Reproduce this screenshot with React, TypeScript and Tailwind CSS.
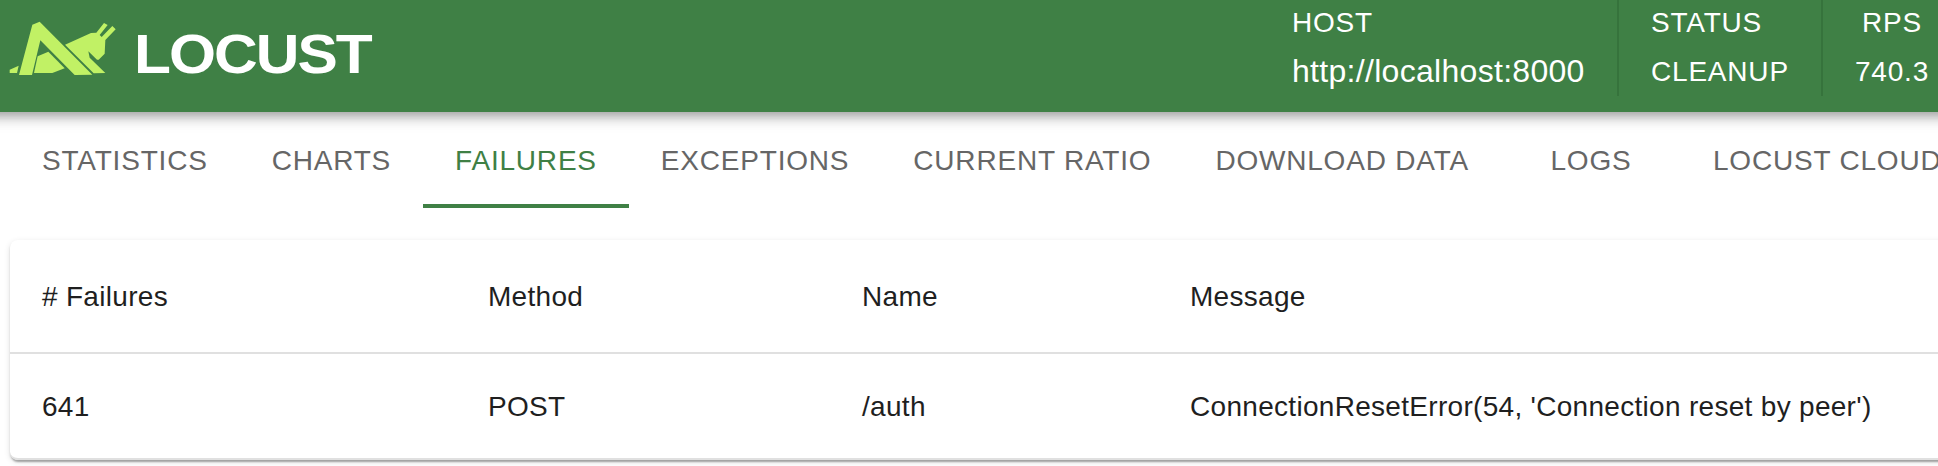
const tabs = ['Statistics', 'Charts', 'Failures', 'Exceptions', 'Current Ratio', 'Download Data', 'Logs', 'Locust Cloud'];

function Grasshopper() {
  return (
    <svg viewBox="28 62 324 164" className="h-[54.7px] w-[108px] shrink-0" fill="#c1f165" aria-hidden="true">
      <path d="M98 73L120 64L278 223L225 224L122 120L97 224L58 224Z" />
      <path d="M30 208L57 196L52 218L30 218Z" />
      <path d="M114 168L146 154L195 204L158 218L103 218Z" />
      <path d="M196 133L274 98L290 97L313 68L324 74L300 104L306 110L338 77L348 87L317 119L315 160L297 178L292 178L266 153L270 172L317 218L282 219Z" />
    </svg>
  );
}

function Tab({ label, active }: { label: string; active: boolean }) {
  return (
    <button
      className={`flex h-24 min-w-[180px] shrink-0 items-center justify-center border-b-4 px-8 pt-1 text-[28px] leading-[35px] tracking-[0.8px] whitespace-nowrap uppercase ${
        active ? 'border-[#3f8045] text-[#3f8045]' : 'border-transparent text-[#666666]'
      }`}
    >
      {label}
    </button>
  );
}

export default function App() {
  return (
    <div className="h-[466px] w-full overflow-hidden bg-white font-['Liberation_Sans',Arial,sans-serif] text-[#1f1f1f]">
      <header className="-mx-6 flex h-28 bg-[#3f8045] px-6 text-white shadow-[0_4px_8px_-2px_rgba(0,0,0,0.2),0_8px_10px_rgba(0,0,0,0.14),0_2px_20px_rgba(0,0,0,0.12)]">
        <div className="flex w-[1292px] shrink-0 items-start pl-[9px]">
          <div className="pt-[20.5px]">
            <Grasshopper />
          </div>
          <span className="ml-[17px] origin-left scale-x-110 pt-[22px] text-[55px] leading-[64px] font-bold tracking-[-1.8px]">
            LOCUST
          </span>
        </div>
        <div className="flex h-24 whitespace-nowrap">
          <div className="w-[327px] border-r-2 border-[#36733c]">
            <div className="h-[46px] text-[28px] leading-[46px] tracking-[0.8px]">HOST</div>
            <div className="text-[32px] leading-[50px] tracking-[0.3px]">http://localhost:8000</div>
          </div>
          <div className="w-[204px] border-r-2 border-[#36733c] pl-8 text-[28px] tracking-[0.8px]">
            <div className="h-[46px] leading-[46px]">STATUS</div>
            <div className="leading-[52px]">CLEANUP</div>
          </div>
          <div className="pl-8 text-center text-[28px] tracking-[0.8px]">
            <div className="h-[46px] leading-[46px]">RPS</div>
            <div className="leading-[52px]">740.3</div>
          </div>
        </div>
      </header>
      <nav className="flex overflow-hidden pl-2.5">
        {tabs.map((t) => (
          <Tab key={t} label={t} active={t === 'Failures'} />
        ))}
      </nav>
      <main className="pt-8 pl-2.5">
        <table className="w-[2000px] table-fixed border-separate border-spacing-0 rounded-lg text-left text-[28px] tracking-[0.3px] shadow-[0_4px_2px_-2px_rgba(0,0,0,0.2),0_2px_2px_rgba(0,0,0,0.14),0_2px_6px_rgba(0,0,0,0.12)]">
          <thead>
            <tr className="h-[114px]">
              <th className="w-[446px] border-b-2 border-[#e0e0e0] pt-0.5 pl-8 font-normal"># Failures</th>
              <th className="w-[374px] border-b-2 border-[#e0e0e0] pt-0.5 pl-8 font-normal">Method</th>
              <th className="w-[328px] border-b-2 border-[#e0e0e0] pt-0.5 pl-8 font-normal">Name</th>
              <th className="border-b-2 border-[#e0e0e0] pt-0.5 pl-8 font-normal">Message</th>
            </tr>
          </thead>
          <tbody>
            <tr className="h-[106px]">
              <td className="rounded-bl-lg border-b-2 border-[#e0e0e0] pt-0.5 pl-8">641</td>
              <td className="border-b-2 border-[#e0e0e0] pt-0.5 pl-8">POST</td>
              <td className="border-b-2 border-[#e0e0e0] pt-0.5 pl-8">/auth</td>
              <td className="border-b-2 border-[#e0e0e0] pt-0.5 pl-8">ConnectionResetError(54, 'Connection reset by peer')</td>
            </tr>
          </tbody>
        </table>
      </main>
    </div>
  );
}
